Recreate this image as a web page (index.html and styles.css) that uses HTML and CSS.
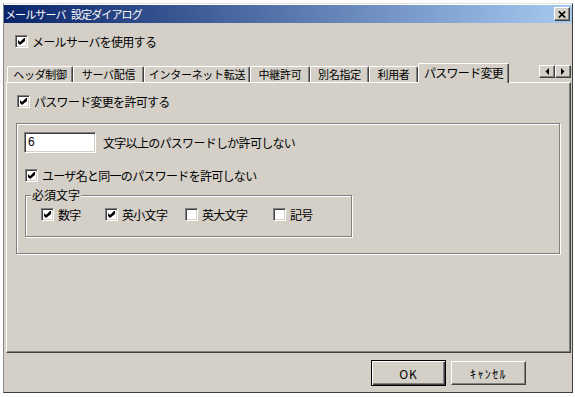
FILE: index.html
```html
<!DOCTYPE html>
<html lang="ja">
<head>
  <meta charset="UTF-8">
  <title>メールサーバ 設定ダイアログ</title>
  <link rel="stylesheet" href="styles.css">
</head>
<body>
  <div class="dialog">
    <!-- title bar -->
    <div class="titlebar">
      <span class="title-text">メールサーバ 設定ダイアログ</span>
      <span class="close-btn">
        <svg width="8" height="7" viewBox="0 0 8 7"><path d="M0.8 0.5 7.2 6.5 M7.2 0.5 0.8 6.5" stroke="#000" stroke-width="1.7"/></svg>
      </span>
    </div>

    <div class="content">
      <div class="check top-check">
        <span class="box"><svg width="11" height="11" viewBox="0 0 11 11"><path d="M2 4 4 6 8 2 9 2 9 5 4 9 2 7z"/></svg></span>
        <span>メールサーバを使用する</span>
      </div>

      <!-- tabs -->
      <div class="tabs">
        <span class="tab">ヘッダ制御</span>
        <span class="tab">サーバ配信</span>
        <span class="tab">インターネット転送</span>
        <span class="tab">中継許可</span>
        <span class="tab">別名指定</span>
        <span class="tab">利用者</span>
        <span class="tab active">パスワード変更</span>
        <div class="tab-scroll">
          <span class="scroll-btn"><svg width="4" height="7" viewBox="0 0 4 7"><path d="M4 0V7L0.5 3.5z"/></svg></span>
          <span class="scroll-btn"><svg width="4" height="7" viewBox="0 0 4 7"><path d="M0 0V7L3.5 3.5z"/></svg></span>
        </div>
      </div>

      <div class="panel">
        <div class="check allow-check">
          <span class="box"><svg width="11" height="11" viewBox="0 0 11 11"><path d="M2 4 4 6 8 2 9 2 9 5 4 9 2 7z"/></svg></span>
          <span>パスワード変更を許可する</span>
        </div>

        <div class="group">
          <div class="length-row">
            <span class="textbox">6</span>
            <span>文字以上のパスワードしか許可しない</span>
          </div>
          <div class="check same-check">
            <span class="box"><svg width="11" height="11" viewBox="0 0 11 11"><path d="M2 4 4 6 8 2 9 2 9 5 4 9 2 7z"/></svg></span>
            <span>ユーザ名と同一のパスワードを許可しない</span>
          </div>

          <div class="group required">
            <span class="legend">必須文字</span>
            <div class="required-row">
              <div class="check item">
                <span class="box"><svg width="11" height="11" viewBox="0 0 11 11"><path d="M2 4 4 6 8 2 9 2 9 5 4 9 2 7z"/></svg></span>
                <span>数字</span>
              </div>
              <div class="check item">
                <span class="box"><svg width="11" height="11" viewBox="0 0 11 11"><path d="M2 4 4 6 8 2 9 2 9 5 4 9 2 7z"/></svg></span>
                <span>英小文字</span>
              </div>
              <div class="check item">
                <span class="box"></span>
                <span>英大文字</span>
              </div>
              <div class="check item">
                <span class="box"></span>
                <span>記号</span>
              </div>
            </div>
          </div>
        </div>
      </div>

      <div class="footer">
        <span class="btn default">OK</span>
        <span class="btn cancel">ｷｬﾝｾﾙ</span>
      </div>
    </div>
  </div>
</body>
</html>
```

FILE: styles.css
```css
* { margin: 0; padding: 0; box-sizing: border-box; }
body {
  width: 575px;
  height: 397px;
  overflow: hidden;
  background: #fdfdfd;
  padding: 3px 2px 0 3px;
  font-family: "Noto Sans CJK JP", "Noto Sans", sans-serif;
  font-size: 12px;
  color: #000;
}
.dialog {
  width: 570px;
  height: 390px;
  background: #d4d0c8;
  border: 1px solid;
  border-color: #e4e2dc #404040 #404040 #8c8a86;
  box-shadow: inset 0 1px 0 #fff;
  padding-top: 1px;
  display: flex;
  flex-direction: column;
}

/* title bar */
.titlebar {
  height: 18px;
  background: linear-gradient(to right, #0a246a, #a6caf0);
  display: flex;
  align-items: center;
  justify-content: space-between;
  padding: 0 2px 0 1px;
  color: #fff;
}
.title-text {
  font-size: 11px;
  line-height: 18px;
  letter-spacing: -0.9px;
  word-spacing: 4px;
}
.close-btn {
  width: 16px;
  height: 14px;
  background: #d4d0c8;
  border: 1px solid;
  border-color: #fff #404040 #404040 #fff;
  box-shadow: inset -1px -1px 0 #808080;
  display: flex;
  align-items: center;
  justify-content: center;
  padding-right: 1px;
}
.close-btn svg { display: block; }

.content {
  flex: 1;
  display: flex;
  flex-direction: column;
  padding: 0 1px 0 2px;
}

/* checkboxes */
.check {
  display: flex;
  align-items: center;
  gap: 4px;
  height: 13px;
  line-height: 13px;
  letter-spacing: -0.7px;
}
.box {
  width: 13px;
  height: 13px;
  flex: none;
  background: #fff;
  border: 1px solid;
  border-color: #808080 #fff #fff #808080;
  box-shadow: inset 1px 1px 0 #404040, inset -1px -1px 0 #d4d0c8;
}
.box svg { display: block; }
.top-check {
  margin: 12px 0 0 9px;
}

/* tabs */
.tabs {
  margin-top: 15px;
  height: 19px;
  display: flex;
  align-items: flex-end;
  padding-left: 1px;
  position: relative;
  z-index: 1;
}
.tab {
  height: 16px;
  border: 1px solid;
  border-bottom: none;
  border-color: #fff #404040 transparent #fff;
  border-radius: 2px 2px 0 0;
  box-shadow: inset -1px 0 0 #808080;
  text-align: center;
  font-size: 11px;
  line-height: 15px;
  letter-spacing: -0.3px;
  white-space: nowrap;
}
.tab:nth-child(1) { width: 66px; }
.tab:nth-child(2) { width: 71px; }
.tab:nth-child(3) { width: 106px; }
.tab:nth-child(4) { width: 60px; }
.tab:nth-child(5) { width: 59px; }
.tab:nth-child(6) { width: 49px; }
.tab.active {
  width: 91px;
  height: 20px;
  margin-bottom: -1px;
  background: #d4d0c8;
  font-size: 12px;
  line-height: 17px;
  letter-spacing: -0.7px;
}
.tab-scroll {
  margin-left: auto;
  align-self: flex-start;
  margin-top: 2px;
  display: flex;
}
.scroll-btn {
  width: 16px;
  height: 13px;
  border: 1px solid;
  border-color: #fff #404040 #404040 #fff;
  box-shadow: inset -1px -1px 0 #808080;
  display: flex;
  align-items: center;
  justify-content: center;
}
.scroll-btn svg { display: block; }

/* tab page */
.panel {
  height: 271px;
  border: 1px solid;
  border-color: #fff #404040 #404040 #fff;
  box-shadow: inset -1px -1px 0 #808080;
  padding: 12px 0 0 9px;
}
.allow-check { margin-left: 1px; }

.group {
  position: relative;
  border: 1px solid #808080;
  box-shadow: inset 1px 1px 0 #fff, 1px 1px 0 #fff;
}
.panel > .group {
  margin-top: 15px;
  width: 544px;
  height: 131px;
  padding: 8px 0 0 7px;
}
.length-row {
  display: flex;
  align-items: center;
  gap: 7px;
  letter-spacing: -0.7px;
}
.textbox {
  width: 72px;
  height: 21px;
  background: #fff;
  border: 1px solid;
  border-color: #808080 #fff #fff #808080;
  box-shadow: inset 1px 1px 0 #404040, inset -1px -1px 0 #d4d0c8;
  padding-left: 3px;
  font-family: "Liberation Sans", sans-serif;
  line-height: 19px;
  letter-spacing: 0;
}
.same-check {
  margin: 16px 0 0 1px;
}
.group.required {
  margin: 13px 0 0 1px;
  width: 327px;
  height: 42px;
  padding: 12px 0 0 15px;
}
.legend {
  position: absolute;
  top: -8px;
  left: 5px;
  padding: 0 1px;
  background: #d4d0c8;
  line-height: 14px;
}
.required-row {
  display: flex;
}
.item:nth-child(1) { width: 64px; }
.item:nth-child(2) { width: 80px; }
.item:nth-child(3) { width: 88px; }

/* buttons */
.footer {
  flex: 1;
  display: flex;
  align-items: center;
  justify-content: flex-end;
  gap: 5px;
  padding: 1px 45px 0 0;
}
.btn {
  width: 75px;
  height: 24px;
  border: 1px solid;
  border-color: #fff #404040 #404040 #fff;
  box-shadow: inset -1px -1px 0 #808080;
  display: flex;
  align-items: center;
  justify-content: center;
  color: #000;
  letter-spacing: 1px;
}
.btn.cancel {
  letter-spacing: 1.4px;
}
.btn.default {
  height: 26px;
  border-color: #000;
  box-shadow: inset 1px 1px 0 #fff, inset -1px -1px 0 #404040, inset -2px -2px 0 #808080;
}
```
